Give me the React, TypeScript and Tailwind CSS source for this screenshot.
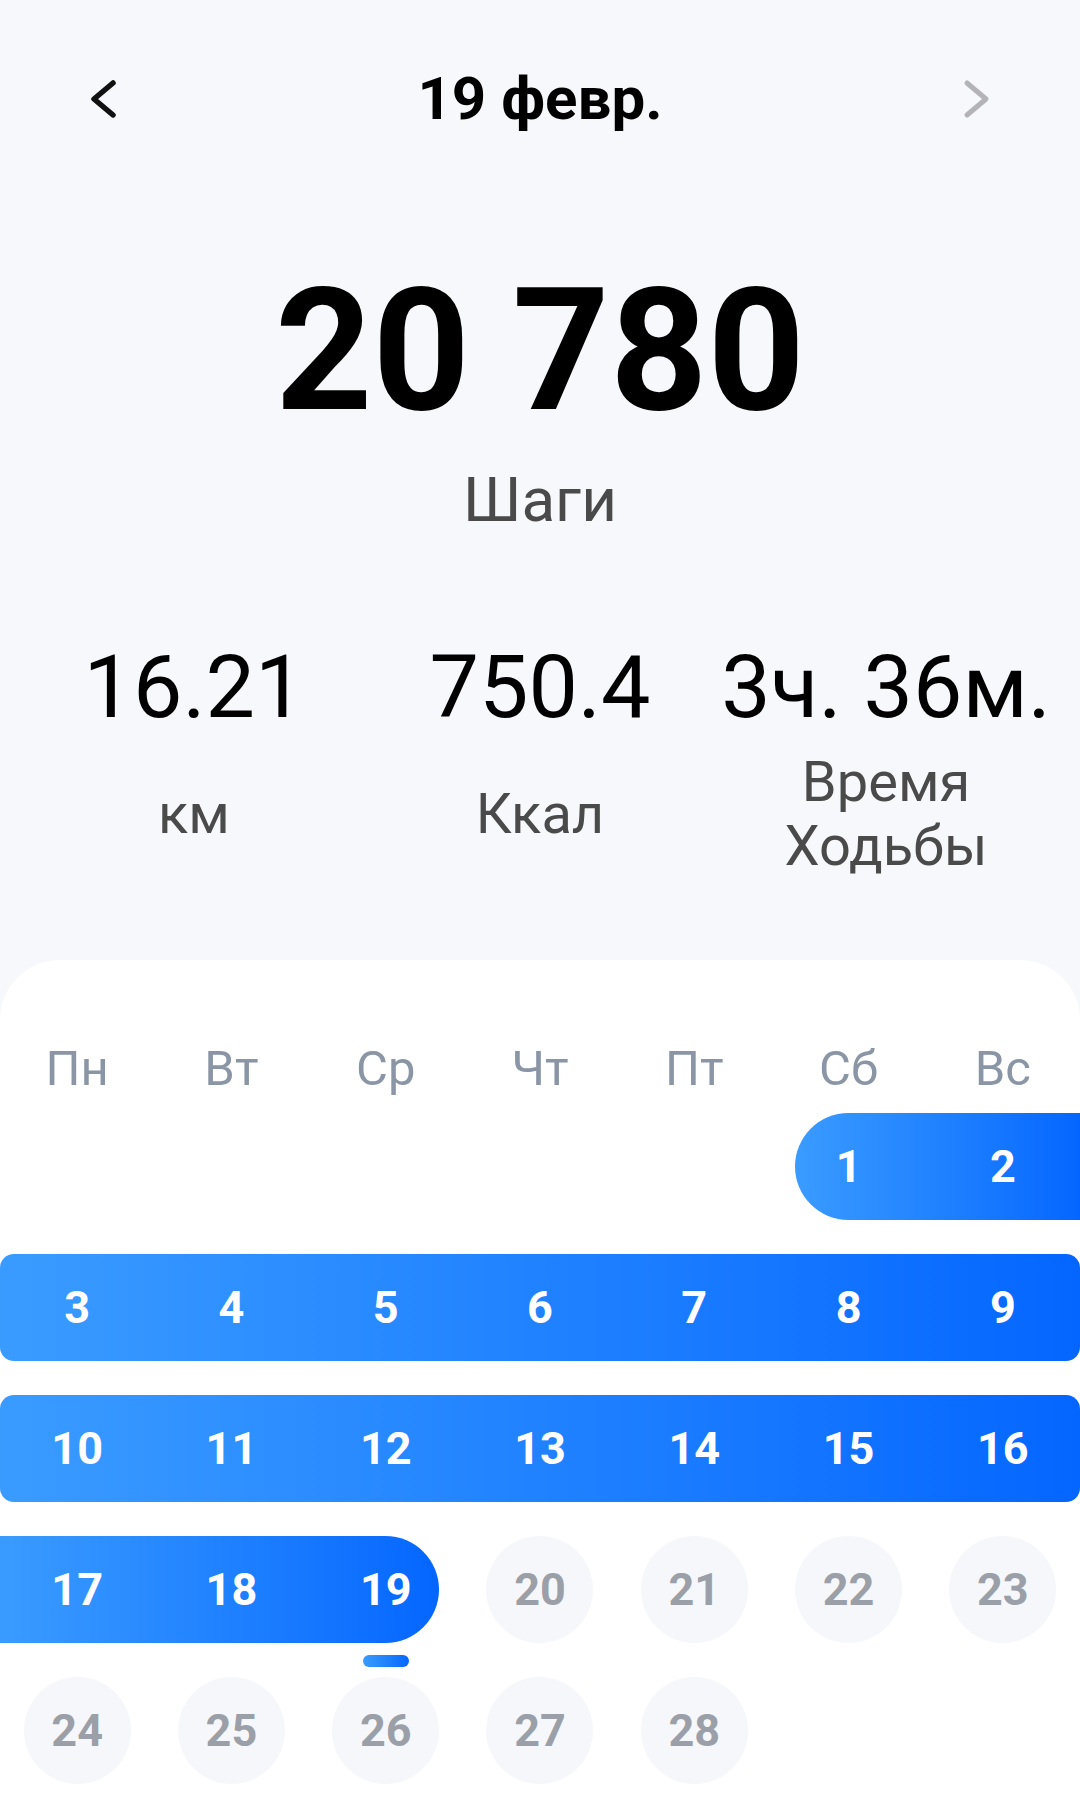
import React from 'react';

const weekDays = ['Пн', 'Вт', 'Ср', 'Чт', 'Пт', 'Сб', 'Вс'];

const DayNum = ({ n }: { n: number }) => (
  <div className="flex items-center justify-center h-[107px] text-[45px] font-bold text-white leading-none">
    {n}
  </div>
);

const GrayDay = ({ n }: { n: number }) => (
  <div className="flex items-center justify-center">
    <div className="w-[107px] h-[107px] rounded-full bg-[#f6f7fb] flex items-center justify-center text-[45px] font-bold text-[#9b9fa8] leading-none">
      {n}
    </div>
  </div>
);

const App = () => {
  return (
    <div
      className="w-[1080px] h-[1808px] bg-[#f7f8fc] overflow-hidden flex flex-col"
      style={{ fontFamily: 'Roboto, "Noto Sans", sans-serif' }}
    >
      {/* header */}
      <div className="h-[198px] flex items-center justify-between px-[88px]">
        <svg width="30" height="40" viewBox="0 0 30 40" fill="none">
          <path d="M25 4 L6 20 L25 36" stroke="#111111" strokeWidth="5.5" strokeLinecap="round" strokeLinejoin="round" />
        </svg>
        <div className="text-[60px] font-bold text-black leading-none">19 февр.</div>
        <svg width="30" height="40" viewBox="0 0 30 40" fill="none">
          <path d="M5 4 L24 20 L5 36" stroke="#b4b4b8" strokeWidth="5" strokeLinecap="round" strokeLinejoin="round" />
        </svg>
      </div>

      {/* steps */}
      <div className="mt-[68px] text-center text-[170px] font-bold leading-none text-black">20 780</div>
      <div className="mt-[33px] text-center text-[62px] leading-none text-[#4a4a4a]">Шаги</div>

      {/* stats */}
      <div className="mt-[112px] px-[21px] grid grid-cols-3 text-center text-[88px] leading-none text-black">
        <div>16.21</div>
        <div>750.4</div>
        <div className="whitespace-nowrap">3ч. 36м.</div>
      </div>
      <div className="mt-[19px] px-[21px] grid grid-cols-3 items-center text-center text-[56px] leading-[64px] text-[#4a4a4a]">
        <div>км</div>
        <div>Ккал</div>
        <div>
          Время
          <br />
          Ходьбы
        </div>
      </div>

      {/* calendar */}
      <div className="mt-[82px] flex-1 bg-white rounded-t-[60px] pt-[84px]">
        <div className="grid grid-cols-7 text-center text-[49px] leading-none text-[#8a95a5]">
          {weekDays.map((d) => (
            <div key={d}>{d}</div>
          ))}
        </div>

        <div className="mt-[20px] flex flex-col gap-[34px]">
          {/* week 1 */}
          <div className="grid grid-cols-7 h-[107px]">
            <div className="col-start-6 col-span-2 ml-[24px] rounded-l-full rounded-r-[14px] bg-gradient-to-r from-[#3a9bff] to-[#0566ff]">
              <div className="grid grid-cols-2 -ml-[24px] w-[calc(100%+24px)]">
                <DayNum n={1} />
                <DayNum n={2} />
              </div>
            </div>
          </div>

          {/* week 2 */}
          <div className="grid grid-cols-7 h-[107px] rounded-[14px] bg-gradient-to-r from-[#3a9bff] to-[#0566ff]">
            {[3, 4, 5, 6, 7, 8, 9].map((n) => (
              <DayNum key={n} n={n} />
            ))}
          </div>

          {/* week 3 */}
          <div className="grid grid-cols-7 h-[107px] rounded-[14px] bg-gradient-to-r from-[#3a9bff] to-[#0566ff]">
            {[10, 11, 12, 13, 14, 15, 16].map((n) => (
              <DayNum key={n} n={n} />
            ))}
          </div>

          {/* week 4 */}
          <div className="grid grid-cols-7 h-[107px]">
            <div className="col-span-3 mr-[24px] rounded-r-full rounded-l-[14px] bg-gradient-to-r from-[#3a9bff] to-[#0566ff]">
              <div className="grid grid-cols-3 w-[calc(100%+24px)]">
                <DayNum n={17} />
                <DayNum n={18} />
                <div className="relative">
                  <DayNum n={19} />
                  <div className="absolute left-1/2 -translate-x-1/2 top-[119px] w-[46px] h-[12px] rounded-full bg-gradient-to-r from-[#3a9bff] to-[#0566ff]" />
                </div>
              </div>
            </div>
            {[20, 21, 22, 23].map((n) => (
              <GrayDay key={n} n={n} />
            ))}
          </div>

          {/* week 5 */}
          <div className="grid grid-cols-7 h-[107px]">
            {[24, 25, 26, 27, 28].map((n) => (
              <GrayDay key={n} n={n} />
            ))}
          </div>
        </div>
      </div>
    </div>
  );
};

export default App;
